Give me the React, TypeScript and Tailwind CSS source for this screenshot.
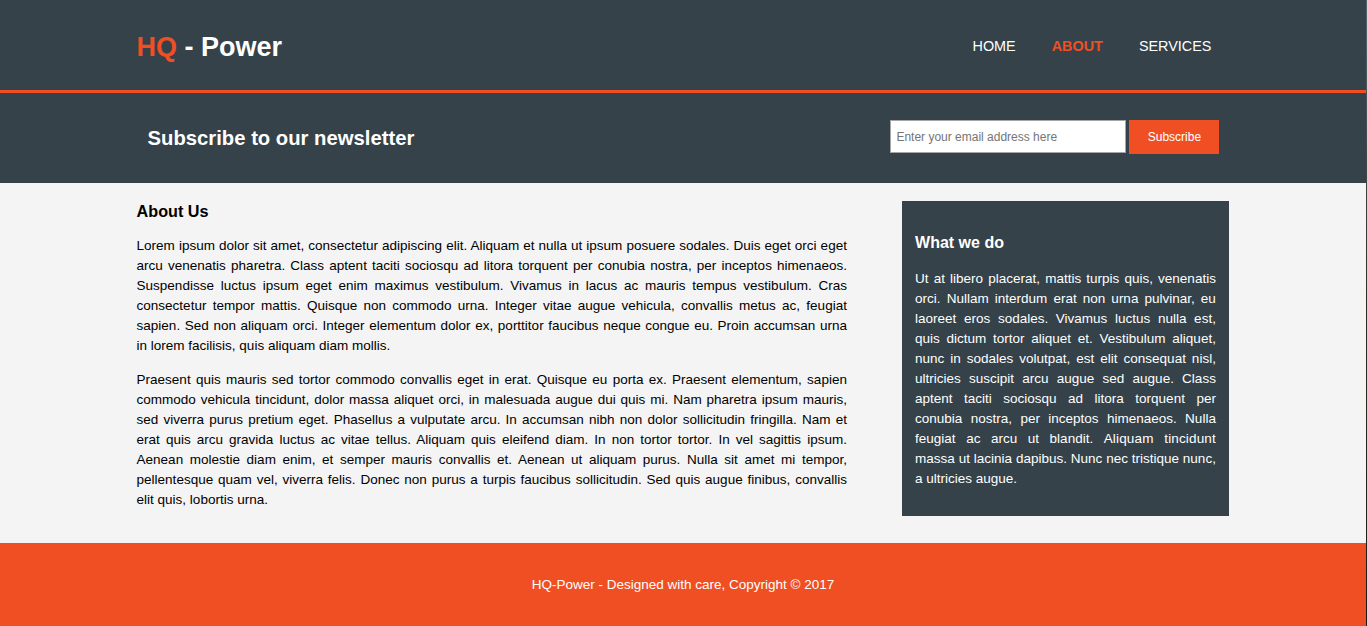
import React from 'react';

const NAV = [
  { label: 'Home', current: false },
  { label: 'About', current: true },
  { label: 'Services', current: false },
];

const App: React.FC = () => {
  return (
    <div className="flex min-h-[626px] bg-[#f4f4f4] font-['Liberation_Sans',Arial,sans-serif] text-[13.5px] leading-[20px] text-black">
      <div className="flex-1 flex flex-col">
        {/* header */}
        <header className="h-[93px] bg-[#35424a] border-b-[3px] border-[#ef4f23] pt-[32px] text-white">
          <div className="w-[80%] mx-auto flex justify-between items-start">
            <h1 className="text-[27px] leading-[31px] font-bold">
              <span className="text-[#ef4f23]">HQ</span> - Power
            </h1>
            <nav className="mt-[4px]">
              <ul className="flex">
                {NAV.map((item) => (
                  <li key={item.label} className="px-[18px]">
                    <a
                      href="#"
                      className={
                        item.current
                          ? 'uppercase text-[14.4px] leading-[21px] font-bold text-[#ef4f23]'
                          : 'uppercase text-[14.4px] leading-[21px] text-white'
                      }
                    >
                      {item.label}
                    </a>
                  </li>
                ))}
              </ul>
            </nav>
          </div>
        </header>

        {/* newsletter */}
        <section className="h-[90px] bg-[#35424a] text-white">
          <div className="w-[80%] mx-auto pl-[11px] pr-[10px] flex justify-between items-start">
            <h1 className="mt-[33px] text-[20.25px] leading-[24px] font-bold">Subscribe to our newsletter</h1>
            <form className="mt-[27px] flex items-start gap-[3px]">
              <input
                type="email"
                placeholder="Enter your email address here"
                className="w-[236px] h-[33px] bg-white border border-[#a6a6a6] pl-[5px] text-[12px] text-black placeholder:text-[#757575] outline-none"
              />
              <button type="button" className="w-[90px] h-[34px] bg-[#ef4f23] text-white text-[12px]">
                Subscribe
              </button>
            </form>
          </div>
        </section>

        {/* content */}
        <section className="pb-[27px]">
          <div className="w-[80%] mx-auto flex justify-between items-start">
            <article className="w-[65%]">
              <h1 className="mt-[16px] text-[16.2px] leading-[24px] font-bold">About Us</h1>
              <p className="mt-[13px] text-justify">
                Lorem ipsum dolor sit amet, consectetur adipiscing elit. Aliquam et nulla ut ipsum posuere sodales. Duis eget orci eget arcu venenatis pharetra. Class aptent taciti sociosqu ad litora torquent per conubia nostra, per inceptos himenaeos. Suspendisse luctus ipsum eget enim maximus vestibulum. Vivamus in lacus ac mauris tempus vestibulum. Cras consectetur tempor mattis. Quisque non commodo urna. Integer vitae augue vehicula, convallis metus ac, feugiat sapien. Sed non aliquam orci. Integer elementum dolor ex, porttitor faucibus neque congue eu. Proin accumsan urna in lorem facilisis, quis aliquam diam mollis.
              </p>
              <p className="mt-[14px] text-justify">
                Praesent quis mauris sed tortor commodo convallis eget in erat. Quisque eu porta ex. Praesent elementum, sapien commodo vehicula tincidunt, dolor massa aliquet orci, in malesuada augue dui quis mi. Nam pharetra ipsum mauris, sed viverra purus pretium eget. Phasellus a vulputate arcu. In accumsan nibh non dolor sollicitudin fringilla. Nam et erat quis arcu gravida luctus ac vitae tellus. Aliquam quis eleifend diam. In non tortor tortor. In vel sagittis ipsum. Aenean molestie diam enim, et semper mauris convallis et. Aenean ut aliquam purus. Nulla sit amet mi tempor, pellentesque quam vel, viverra felis. Donec non purus a turpis faucibus sollicitudin. Sed quis augue finibus, convallis elit quis, lobortis urna.
              </p>
            </article>

            <aside className="w-[30%] mt-[18px] bg-[#35424a] text-white p-[13.5px]">
              <h3 className="mt-[16px] text-[16px] leading-[24px] font-bold">What we do</h3>
              <p className="mt-[14px] mb-[14px] text-justify">
                Ut at libero placerat, mattis turpis quis, venenatis orci. Nullam interdum erat non urna pulvinar, eu laoreet eros sodales. Vivamus luctus nulla est, quis dictum tortor aliquet et. Vestibulum aliquet, nunc in sodales volutpat, est elit consequat nisl, ultricies suscipit arcu augue sed augue. Class aptent taciti sociosqu ad litora torquent per conubia nostra, per inceptos himenaeos. Nulla feugiat ac arcu ut blandit. <span className="tracking-[0.15px]">Aliquam tincidunt</span> massa ut lacinia dapibus. Nunc nec tristique nunc, a ultricies augue.
              </p>
            </aside>
          </div>
        </section>

        {/* footer */}
        <footer className="bg-[#ef4f23] text-white text-center py-[31.5px]">
          <p>HQ-Power - Designed with care, Copyright &copy; 2017</p>
        </footer>
      </div>
      <div className="w-px bg-gradient-to-b from-[#5a6670] via-[#2e2a26] to-[#1c1a18]" />
    </div>
  );
};

export default App;
